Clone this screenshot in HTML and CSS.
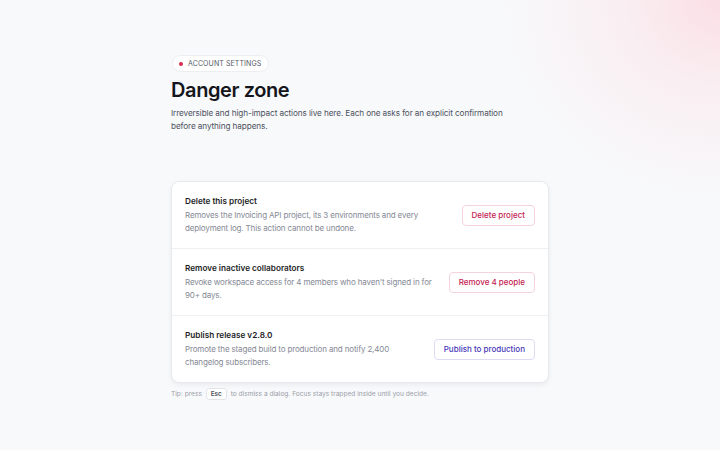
FILE: index.html
```html
<!DOCTYPE html>
<html lang="en">
<head>
    <meta charset="UTF-8">
    <meta name="viewport" content="width=device-width, initial-scale=1.0">
    <title>Danger zone</title>
    <link rel="stylesheet" href="styles.css">
</head>
<body>

    <div class="page">
        <span class="eyebrow"><span class="dot"></span>ACCOUNT SETTINGS</span>
        <h1>Danger zone</h1>
        <p class="lead">Irreversible and high-impact actions live here. Each one asks for an explicit confirmation before anything happens.</p>

        <div class="card">
            <div class="row">
                <div class="info">
                    <h3>Delete this project</h3>
                    <p>Removes the Invoicing API project, its 3 environments and every deployment log. This action cannot be undone.</p>
                </div>
                <button class="btn danger">Delete project</button>
            </div>
            <div class="row">
                <div class="info">
                    <h3>Remove inactive collaborators</h3>
                    <p>Revoke workspace access for 4 members who haven't signed in for 90+ days.</p>
                </div>
                <button class="btn danger">Remove 4 people</button>
            </div>
            <div class="row">
                <div class="info">
                    <h3>Publish release v2.8.0</h3>
                    <p>Promote the staged build to production and notify 2,400 changelog subscribers.</p>
                </div>
                <button class="btn primary">Publish to production</button>
            </div>
        </div>

        <p class="tip">Tip: press <kbd>Esc</kbd> to dismiss a dialog. Focus stays trapped inside until you decide.</p>
    </div>

</body>
</html>
```

FILE: styles.css
```css
body {
    font-family: Inter, "Noto Sans", sans-serif;
    margin: 0;
    min-height: 450px;
    background-color: #f8f9fb;
    background-image: radial-gradient(ellipse 220px 200px at 100% 0%, rgba(251, 220, 227, 0.9) 0, rgba(250, 228, 233, 0.5) 45%, rgba(248, 249, 251, 0) 100%);
    color: #15161c;
}

.page {
    width: 378px;
    margin: 0 auto;
    padding-top: 55px;
}

.eyebrow {
    display: flex;
    width: max-content;
    align-items: center;
    gap: 5px;
    height: 15px;
    padding: 0 7px 0 6px;
    margin-left: 1px;
    background: #fff;
    border: 1px solid #eceef2;
    border-radius: 9px;
    font-size: 7px;
    letter-spacing: 0.1px;
    color: #555a66;
}

.dot {
    width: 4px;
    height: 4px;
    border-radius: 50%;
    background: #d6294f;
}

h1 {
    font-size: 20px;
    font-weight: 600;
    letter-spacing: -0.4px;
    margin: 5px 0 0;
    line-height: 26px;
}

.lead {
    font-size: 8.2px;
    line-height: 13px;
    letter-spacing: -0.1px;
    color: #4d5260;
    margin: 4px 0 0;
    max-width: 350px;
}

.card {
    margin-top: 48px;
    background: #fff;
    border: 1px solid #e7e9ee;
    border-radius: 8px;
    box-shadow: 0 2px 5px rgba(20, 24, 40, 0.06);
}

.row {
    display: flex;
    align-items: center;
    justify-content: space-between;
    gap: 10px;
    height: 66px;
    padding: 0 13px;
    border-bottom: 1px solid #eef0f3;
}

.row:last-child {
    border-bottom: none;
}

.info h3 {
    font-size: 8.2px;
    font-weight: 600;
    margin: 0 0 3px;
    color: #1c1e26;
}

.info p {
    font-size: 8px;
    line-height: 13px;
    letter-spacing: -0.15px;
    margin: 0;
    color: #858995;
    max-width: 258px;
}

.btn {
    font-family: inherit;
    font-size: 8px;
    font-weight: 500;
    background: #fff;
    border-radius: 4px;
    height: 21px;
    padding: 0 9px;
    white-space: nowrap;
    cursor: pointer;
}

.danger {
    color: #c42353;
    border: 1px solid #f4d3dc;
}

.primary {
    color: #4634b8;
    border: 1px solid #dcdcf2;
}

.tip {
    font-size: 6.6px;
    color: #9a9ea8;
    margin: 7px 0 0;
}

kbd {
    font-family: inherit;
    font-size: 6.4px;
    font-weight: 600;
    color: #4d5260;
    background: #fff;
    border: 1px solid #e2e4e9;
    border-radius: 3px;
    padding: 1px 4px;
    margin: 0 2px;
}
```
